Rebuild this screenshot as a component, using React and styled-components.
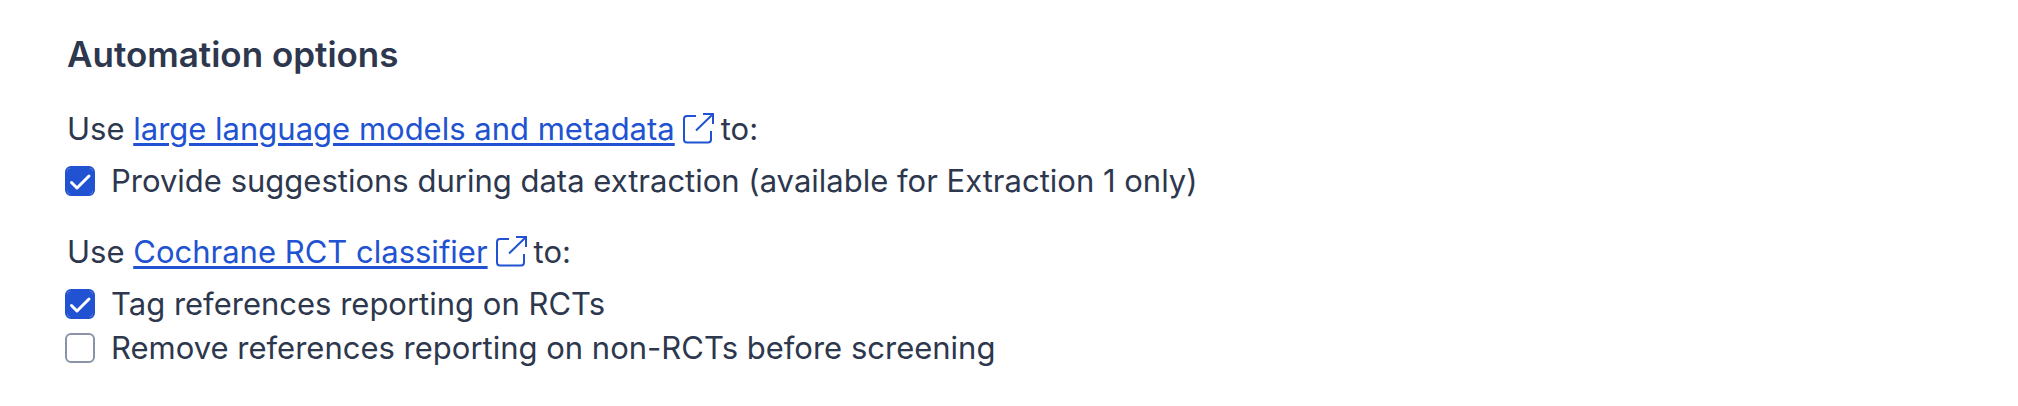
import React, { useState } from 'react';
import styled, { createGlobalStyle } from 'styled-components';

const ExternalIcon = () => (
    <StIcon viewBox="0 0 32 32" aria-hidden="true">
        <path d="M14 4H5A3 3 0 0 0 2 7V27.500A3 3 0 0 0 5 30.500H26A3 3 0 0 0 29 27.500V19" />
        <path d="M21 2H31V12M31 2L14 18.500" />
    </StIcon>
);

const Option = ({ label, defaultChecked = false }) => {
    const [checked, setChecked] = useState(defaultChecked);

    return (
        <StOption>
            <StBox>
                <StCheckbox type="checkbox" checked={checked} onChange={(e) => setChecked(e.target.checked)} />
                {checked && (
                    <StTick viewBox="0 0 30 30" aria-hidden="true">
                        <path d="M6.500 16.500L12 22L24 10" />
                    </StTick>
                )}
            </StBox>
            {label}
        </StOption>
    );
};

const App = () => {
    return (
        <StContainer>
            <GlobalStyle />
            <StTitle>Automation options</StTitle>
            <StGroup>
                <StIntro>
                    Use <StLink href="#models">large language models and metadata</StLink>
                    <ExternalIcon />
                    to:
                </StIntro>
                <Option label="Provide suggestions during data extraction (available for Extraction 1 only)" defaultChecked />
            </StGroup>
            <StGroup>
                <StIntro>
                    Use <StLink href="#classifier">Cochrane RCT classifier</StLink>
                    <ExternalIcon />
                    to:
                </StIntro>
                <Option label="Tag references reporting on RCTs" defaultChecked />
                <Option label="Remove references reporting on non-RCTs before screening" />
            </StGroup>
        </StContainer>
    );
};

export default App;

const GlobalStyle = createGlobalStyle`
    body {
        margin: 0;
        background-color: #fff;
    }
`;

const StContainer = styled.main`
    padding: 32px 67px 0;
    color: #2d374d;
    font-family: Inter, sans-serif;
    font-size: 31px;
    line-height: 44px;
`;

const StTitle = styled.h2`
    margin: 0 0 31px;
    font-size: 35px;
    font-weight: 600;
`;

const StGroup = styled.section`
    & + & {
        margin-top: 27px;
    }
`;

const StIntro = styled.p`
    margin: 0 0 8px;
`;

const StLink = styled.a`
    color: #2152d1;
    text-decoration: underline;
    text-decoration-thickness: 3px;
    text-underline-offset: 3px;
`;

const StIcon = styled.svg`
    width: 32px;
    height: 32px;
    margin: 0 7px;
    vertical-align: -4px;
    fill: none;
    stroke: #2152d1;
    stroke-width: 2;
`;

const StOption = styled.label`
    display: flex;
    align-items: center;
    gap: 16px;
    margin-left: -2px;
`;

const StBox = styled.span`
    display: grid;
    flex: none;

    & > * {
        grid-area: 1 / 1;
    }
`;

const StCheckbox = styled.input`
    appearance: none;
    box-sizing: border-box;
    width: 30px;
    height: 30px;
    margin: 0;
    border: 2px solid #8a94a8;
    border-radius: 6px;

    &:checked {
        border-color: #2152d1;
        background-color: #2152d1;
        background-clip: padding-box;
    }
`;

const StTick = styled.svg`
    width: 30px;
    height: 30px;
    fill: none;
    stroke: #fff;
    stroke-width: 3;
    stroke-linecap: round;
    stroke-linejoin: round;
    pointer-events: none;
`;
